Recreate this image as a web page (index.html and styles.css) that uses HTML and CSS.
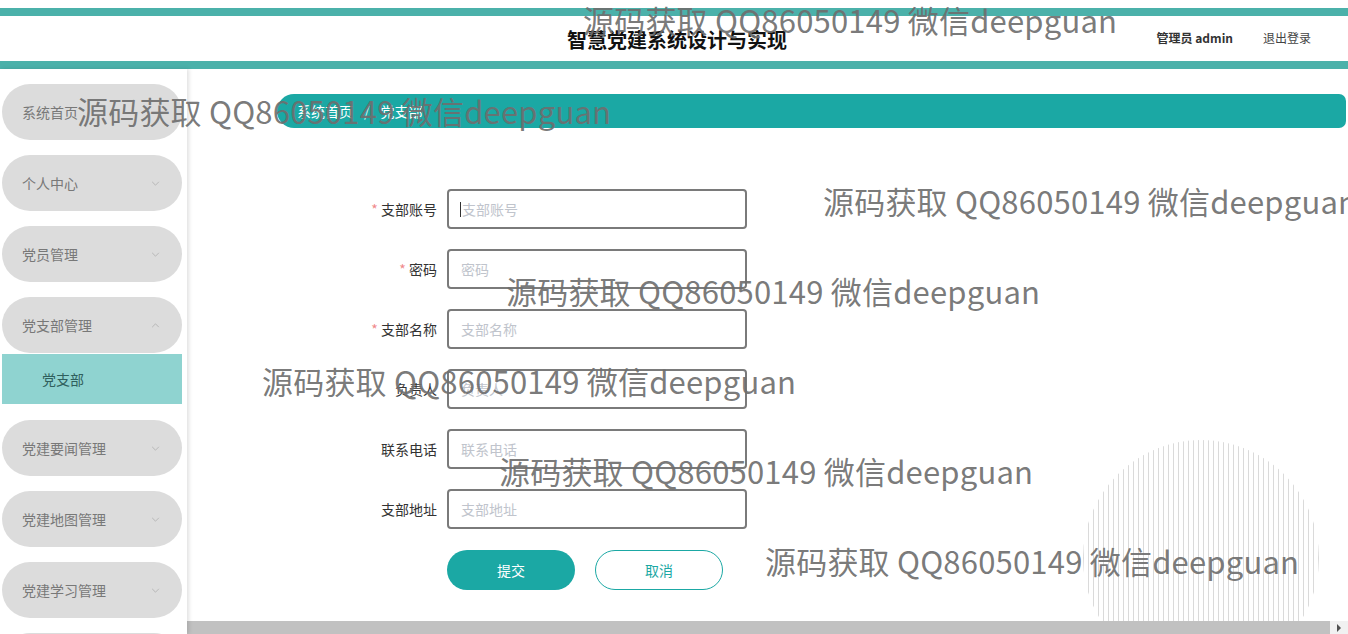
FILE: index.html
```html
<!DOCTYPE html>
<html lang="zh">
<head>
<meta charset="utf-8">
<title>智慧党建系统设计与实现</title>
<link rel="stylesheet" href="styles.css">
</head>
<body>
<header class="topbar">
  <div class="title">智慧党建系统设计与实现</div>
  <div class="user">
    <span class="admin">管理员 admin</span>
    <span class="logout">退出登录</span>
  </div>
</header>
<div class="main">
  <aside class="sidebar">
    <div class="menu-item"><span>系统首页</span></div>
    <div class="menu-item"><span>个人中心</span><svg class="chev" viewBox="0 0 10 6" width="9" height="5"><polyline points="1,1 5,5 9,1"/></svg></div>
    <div class="menu-item"><span>党员管理</span><svg class="chev" viewBox="0 0 10 6" width="9" height="5"><polyline points="1,1 5,5 9,1"/></svg></div>
    <div class="menu-item open"><span>党支部管理</span><svg class="chev" viewBox="0 0 10 6" width="9" height="5"><polyline points="1,5 5,1 9,5"/></svg></div>
    <div class="sub-item">党支部</div>
    <div class="menu-item"><span>党建要闻管理</span><svg class="chev" viewBox="0 0 10 6" width="9" height="5"><polyline points="1,1 5,5 9,1"/></svg></div>
    <div class="menu-item"><span>党建地图管理</span><svg class="chev" viewBox="0 0 10 6" width="9" height="5"><polyline points="1,1 5,5 9,1"/></svg></div>
    <div class="menu-item"><span>党建学习管理</span><svg class="chev" viewBox="0 0 10 6" width="9" height="5"><polyline points="1,1 5,5 9,1"/></svg></div>
    <div class="menu-item"><span>系统管理</span><svg class="chev" viewBox="0 0 10 6" width="9" height="5"><polyline points="1,1 5,5 9,1"/></svg></div>
  </aside>
  <section class="content">
    <div class="scroll">
      <div class="breadcrumb"><span>系统首页</span><span class="sep">/</span><span>党支部</span></div>
      <form class="form">
        <label class="label"><i>*</i> 支部账号</label>
        <div class="input focus"><span class="caret"></span>支部账号</div>
        <label class="label"><i>*</i> 密码</label>
        <div class="input">密码</div>
        <label class="label"><i>*</i> 支部名称</label>
        <div class="input">支部名称</div>
        <label class="label">负责人</label>
        <div class="input">负责人</div>
        <label class="label">联系电话</label>
        <div class="input">联系电话</div>
        <label class="label">支部地址</label>
        <div class="input">支部地址</div>
        <div></div>
        <div class="buttons">
          <button type="button" class="btn primary">提交</button>
          <button type="button" class="btn ghost">取消</button>
        </div>
      </form>
      <div class="deco"></div>
    </div>
    <div class="hscroll">
      <div class="thumb"></div>
      <div class="arrow"><svg viewBox="0 0 6 8" width="6" height="8"><polygon points="1,0 5,4 1,8"/></svg></div>
    </div>
  </section>
</div>
<div class="wm wm1">源码获取 QQ86050149 微信deepguan</div>
<div class="wm wm2">源码获取 QQ86050149 微信deepguan</div>
<div class="wm wm3">源码获取 QQ86050149 微信deepguan</div>
<div class="wm wm4">源码获取 QQ86050149 微信deepguan</div>
<div class="wm wm5">源码获取 QQ86050149 微信deepguan</div>
<div class="wm wm6">源码获取 QQ86050149 微信deepguan</div>
<div class="wm wm7">源码获取 QQ86050149 微信deepguan</div>
</body>
</html>
```
FILE: styles.css
```css
* { box-sizing: border-box; }
html, body { margin: 0; padding: 0; }
body {
  font-family: "Noto Sans CJK SC", "Noto Sans", sans-serif;
  color: #333;
  height: 100vh;
  overflow: hidden;
  display: flex;
  flex-direction: column;
  background: #fff;
  position: relative;
}
.topbar {
  margin-top: 8px;
  height: 61px;
  border-top: 8px solid #4bb1aa;
  border-bottom: 8px solid #4bb1aa;
  display: flex;
  align-items: center;
  justify-content: center;
  position: relative;
  flex: none;
}
.title {
  font-size: 20px;
  font-weight: 700;
  color: #111;
  margin-left: 6px;
  margin-top: 2px;
}
.user {
  position: absolute;
  right: 37px;
  top: 13px;
  font-size: 12px;
  display: flex;
  gap: 30px;
}
.admin { font-weight: 700; color: #333; }
.logout { color: #444; }
.main {
  flex: 1;
  min-height: 0;
  display: flex;
}
.sidebar {
  width: 187px;
  flex: none;
  padding-top: 15px;
  overflow: hidden;
  box-shadow: 2px 0 4px rgba(0,0,0,0.12);
  position: relative;
  z-index: 1;
  background: #fff;
}
.menu-item {
  width: 180px;
  height: 56px;
  margin: 0 0 15px 2px;
  border-radius: 28px;
  background: #dcdcdc;
  display: flex;
  align-items: center;
  justify-content: space-between;
  padding: 0 22px 0 20px;
  font-size: 14px;
  color: #787878;
}
.menu-item.open { margin-bottom: 1px; }
.chev {
  fill: none;
  stroke: #b0b0b0;
  stroke-width: 1;
}
.sub-item {
  width: 180px;
  height: 50px;
  margin: 0 0 16px 2px;
  background: #8fd3d0;
  display: flex;
  align-items: center;
  padding-left: 40px;
  font-size: 14px;
  color: #2f5f5d;
}
.content {
  flex: 1;
  min-width: 0;
  display: flex;
  flex-direction: column;
}
.scroll {
  flex: 1;
  position: relative;
  overflow: hidden;
  padding-top: 25px;
}
.breadcrumb {
  margin-left: 90px;
  margin-right: 2px;
  height: 34px;
  background: #1ba8a4;
  border-radius: 17px 7px 7px 17px;
  display: flex;
  align-items: center;
  padding-left: 20px;
  font-size: 14px;
  color: #fff;
  gap: 11px;
}
.breadcrumb .sep { color: #d8f0ef; }
.form {
  margin-top: 61px;
  display: grid;
  grid-template-columns: 250px 300px;
  column-gap: 10px;
  row-gap: 20px;
  position: relative;
  z-index: 1;
}
.label {
  font-size: 14px;
  color: #333;
  text-align: right;
  line-height: 40px;
}
.label i {
  font-style: normal;
  color: #f08a8a;
}
.input {
  height: 40px;
  border: 2px solid #7a7a7a;
  border-radius: 4px;
  font-size: 14px;
  color: #c0c4cc;
  display: flex;
  align-items: center;
  padding-left: 12px;
  background: #fff;
}
.caret {
  width: 1px;
  height: 15px;
  background: #333;
  margin-left: -1px;
  margin-right: 1px;
}
.buttons {
  display: flex;
  gap: 20px;
  margin-top: 1px;
}
.btn {
  width: 128px;
  height: 40px;
  border-radius: 20px;
  font-family: inherit;
  font-size: 14px;
  cursor: pointer;
}
.btn.primary {
  background: #1ba8a4;
  border: none;
  color: #fff;
}
.btn.ghost {
  background: #fff;
  border: 1px solid #1ba8a4;
  color: #1ba8a4;
}
.deco {
  position: absolute;
  left: 896px;
  top: 371px;
  width: 236px;
  height: 236px;
  border-radius: 50%;
  background: repeating-linear-gradient(90deg, #dadada 0 1px, transparent 1px 5px);
}
.hscroll {
  height: 13px;
  flex: none;
  display: flex;
  background: #f1f1f1;
}
.thumb {
  flex: 1;
  background: #c1c1c1;
}
.arrow {
  width: 18px;
  display: flex;
  align-items: center;
  justify-content: center;
}
.arrow polygon { fill: #505050; }
.wm {
  position: absolute;
  font-size: 31px;
  line-height: 32px;
  letter-spacing: 0.2px;
  color: rgba(110,110,110,0.92);
  white-space: nowrap;
  z-index: 5;
  pointer-events: none;
  font-family: "Noto Sans CJK SC", "Noto Sans", sans-serif;
}
.wm1 { left: 583px; top: 4px; }
.wm2 { left: 77px; top: 95px; }
.wm3 { left: 823px; top: 185px; }
.wm4 { left: 506px; top: 275px; }
.wm5 { left: 262px; top: 365px; }
.wm6 { left: 499px; top: 455px; }
.wm7 { left: 765px; top: 545px; }
```
